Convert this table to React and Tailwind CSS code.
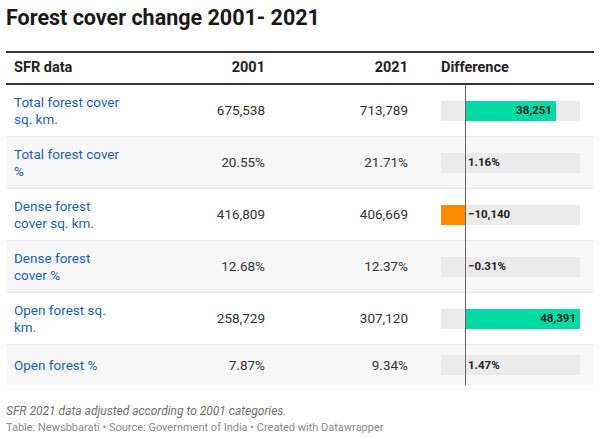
import React from "react";

const MAX = 48391;
const ZERO = 24; // px from bar start
const POS = 115; // px for MAX

const rows = [
  { label: "Total forest cover sq. km.", a: "675,538", b: "713,789", v: 38251, t: "38,251" },
  { label: "Total forest cover %", a: "20.55%", b: "21.71%", v: 1.16, t: "1.16%" },
  { label: "Dense forest cover sq. km.", a: "416,809", b: "406,669", v: -10140, t: "\u221210,140" },
  { label: "Dense forest cover %", a: "12.68%", b: "12.37%", v: -0.31, t: "\u22120.31%" },
  { label: "Open forest sq. km.", a: "258,729", b: "307,120", v: 48391, t: "48,391" },
  { label: "Open forest %", a: "7.87%", b: "9.34%", v: 1.47, t: "1.47%" },
];

function Bar({ v, t }) {
  const w = (Math.abs(v) / MAX) * POS;
  const big = w > 40;
  return (
    <div className="relative h-[20px] w-[139px] bg-[#ebebeb]">
      {v > 0 && (
        <div
          className="absolute top-0 h-full bg-[#00daa3]"
          style={{ left: ZERO, width: w }}
        />
      )}
      {v < 0 && (
        <div
          className="absolute top-0 h-full bg-[#ff8c00]"
          style={{ left: ZERO - w, width: w }}
        />
      )}
      {big ? (
        <span
          className="absolute top-0 h-full flex items-center justify-end pr-[4px] text-[11.5px] font-bold text-[#222]"
          style={{ left: ZERO, width: w }}
        >
          {t}
        </span>
      ) : (
        <span className="absolute top-0 left-[27px] h-full flex items-center text-[11.5px] font-bold text-[#222]">
          {t}
        </span>
      )}
    </div>
  );
}

export default function App() {
  return (
    <div className="w-[600px] h-[439px] bg-white px-[6px] font-['Roboto',sans-serif] overflow-hidden">
      <h1 className="pt-[5px] text-[21.5px] leading-[26px] font-bold text-[#181818]">
        Forest cover change 2001- 2021
      </h1>
      <div className="mt-[20px] border-t-2 border-[#333]">
        <div className="grid grid-cols-[130px_137px_160px_1fr] h-[32px] items-center border-b-2 border-[#333] text-[14.5px] font-bold text-[#222]">
          <div className="pl-[8px]">SFR data</div>
          <div className="text-right pr-[8px]">2001</div>
          <div className="text-right pr-[25px]">2021</div>
          <div className="pl-[8px]">Difference</div>
        </div>
        <div className="relative">
          {rows.map((r, i) => (
            <div
              key={i}
              className={`grid grid-cols-[130px_137px_160px_1fr] items-center text-[13.5px] leading-[17px] ${
                i % 2 === 1 ? "bg-[#f7f7f7]" : "bg-white"
              } ${i < rows.length - 1 ? "border-b border-[#e8e8e8] py-[8.5px]" : "py-[10px]"}`}
            >
              <div className="pl-[8px] pr-[10px] text-[#1d5fb3]">{r.label}</div>
              <div className="text-right pr-[8px] text-[#333]">{r.a}</div>
              <div className="text-right pr-[25px] text-[#333]">{r.b}</div>
              <div className="pl-[8px]">
                <Bar v={r.v} t={r.t} />
              </div>
            </div>
          ))}
          <div className="absolute left-[459px] top-0 bottom-0 w-px bg-[#666]" />
        </div>
      </div>
      <div className="mt-[18px] text-[12px] leading-[16px] italic text-[#707070]">
        SFR 2021 data adjusted according to 2001 categories.
      </div>
      <div className="mt-[2px] text-[11px] leading-[14px] text-[#8a8a8a]">
        Table: Newsbbarati • Source: Government of India • Created with Datawrapper
      </div>
    </div>
  );
}
